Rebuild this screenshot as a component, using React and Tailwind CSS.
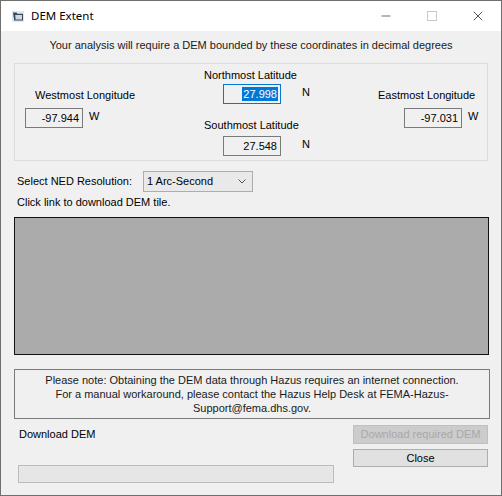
import { Minus, X } from 'lucide-react';

function ReadBox({ value, focused }) {
  return (
    <div
      className={`w-[58px] h-[20px] flex items-center justify-end pr-[2px] bg-[#f0f0f0] border ${
        focused ? 'border-[#0078d7]' : 'border-[#7a7a7a]'
      }`}
    >
      {focused ? (
        <span className="bg-[#0078d7] text-white leading-[14px] px-[1px]">{value}</span>
      ) : (
        <span className="leading-[14px] pr-[1px]">{value}</span>
      )}
    </div>
  );
}

function Coord({ label, value, unit, focused, labelMl, boxMl, unitGap }) {
  return (
    <>
      <div className="leading-[13px] whitespace-nowrap" style={{ marginLeft: labelMl }}>
        {label}
      </div>
      <div className="flex items-start" style={{ marginLeft: boxMl }}>
        <ReadBox value={value} focused={focused} />
        <span className="leading-[13px] mt-[2px]" style={{ marginLeft: unitGap }}>
          {unit}
        </span>
      </div>
    </>
  );
}

export default function App() {
  return (
    <div
      className="w-[502px] h-[496px] flex flex-col bg-[#f0f0f0] border border-[#6f6f6f] text-[11px] text-[#000] overflow-hidden"
      style={{ fontFamily: '"Liberation Sans", Arial, sans-serif' }}
    >
      {/* title bar */}
      <div className="h-[30px] bg-white flex items-center shrink-0">
        <svg width="12" height="11" viewBox="0 0 12 11" className="ml-[11px]">
          <rect x="0" y="0" width="12" height="11" fill="#e3e8ee" />
          <path d="M1 1.5h3.5l0.8 1.2H11V9.5H2.2z" fill="#33495e" />
          <path d="M3.2 4h6.8v4.6H3.6z" fill="#cdd8e3" />
        </svg>
        <span
          className="ml-[7px] text-[11.5px] text-black"
          style={{ fontFamily: '"Noto Sans", "Open Sans", sans-serif' }}
        >
          DEM Extent
        </span>
        <div className="ml-auto flex h-full">
          <div className="w-[46px] flex items-center justify-center">
            <Minus size={14} strokeWidth={1} />
          </div>
          <div className="w-[46px] flex items-center justify-center">
            <div className="w-[10px] h-[10px] border border-[#c8c8c8]" />
          </div>
          <div className="w-[46px] flex items-center justify-center">
            <X size={16} strokeWidth={1} />
          </div>
        </div>
      </div>

      <div className="flex-1 flex flex-col px-[13px]">
        <div className="text-center mt-[8px] leading-[13px] text-[#1a1a1a]">
          Your analysis will require a DEM bounded by these coordinates in decimal degrees
        </div>

        {/* coordinates group */}
        <div className="mt-[11px] h-[98px] border border-[#dcdcdc] flex">
          <div className="w-[175px] pt-[25px] flex flex-col gap-[6px]">
            <Coord label="Westmost Longitude" value="-97.944" unit="W" labelMl={20} boxMl={10} unitGap={6} />
          </div>
          <div className="w-[180px] pt-[5px] flex flex-col">
            <div className="flex flex-col gap-[2px]">
              <Coord label="Northmost Latitude" value="27.998" unit="N" focused labelMl={14} boxMl={33} unitGap={21} />
            </div>
            <div className="flex flex-col gap-[4px] mt-[15px]">
              <Coord label="Southmost Latitude" value="27.548" unit="N" labelMl={14} boxMl={33} unitGap={21} />
            </div>
          </div>
          <div className="flex-1 pt-[25px] flex flex-col gap-[6px]">
            <Coord label="Eastmost Longitude" value="-97.031" unit="W" labelMl={8} boxMl={34} unitGap={6} />
          </div>
        </div>

        {/* resolution */}
        <div className="mt-[10px] flex items-center">
          <span className="ml-[3px] w-[126px] leading-[13px]">Select NED Resolution:</span>
          <div className="w-[110px] h-[21px] bg-[#e9e9e9] border border-[#adadad] flex items-center pl-[3px] pr-[6px]">
            <span>1 Arc-Second</span>
            <svg width="8" height="5" viewBox="0 0 8 5" className="ml-auto">
              <path d="M0.5 0.5L4 4L7.5 0.5" fill="none" stroke="#555" strokeWidth="1" />
            </svg>
          </div>
        </div>
        <div className="ml-[3px] mt-[4px] leading-[13px]">Click link to download DEM tile.</div>

        <div className="mt-[8px] h-[138px] w-[475px] bg-[#ababab] border border-[#111]" />

        <div className="mt-[14px] h-[50px] w-[476px] border border-[#7a7a7a] flex flex-col items-center justify-center leading-[14px] text-[#1a1a1a]">
          <div>Please note: Obtaining the DEM data through Hazus requires an internet connection.</div>
          <div>For a manual workaround, please contact the Hazus Help Desk at FEMA-Hazus-</div>
          <div>Support@fema.dhs.gov.</div>
        </div>

        {/* bottom */}
        <div className="flex mt-[6px]">
          <div className="w-[340px] flex flex-col">
            <div className="ml-[5px] mt-[3px] leading-[13px]">Download DEM</div>
            <div className="ml-[4px] mt-[24px] w-[316px] h-[18px] bg-[#e6e6e6] border border-[#bcbcbc]" />
          </div>
          <div className="flex flex-col">
            <div className="w-[135px] h-[19px] bg-[#cccccc] border border-[#bfbfbf] flex items-center justify-center text-[#a8a8a8]">
              Download required DEM
            </div>
            <div className="mt-[5px] w-[135px] h-[18px] bg-[#e1e1e1] border border-[#adadad] flex items-center justify-center">
              Close
            </div>
          </div>
        </div>
      </div>
    </div>
  );
}
